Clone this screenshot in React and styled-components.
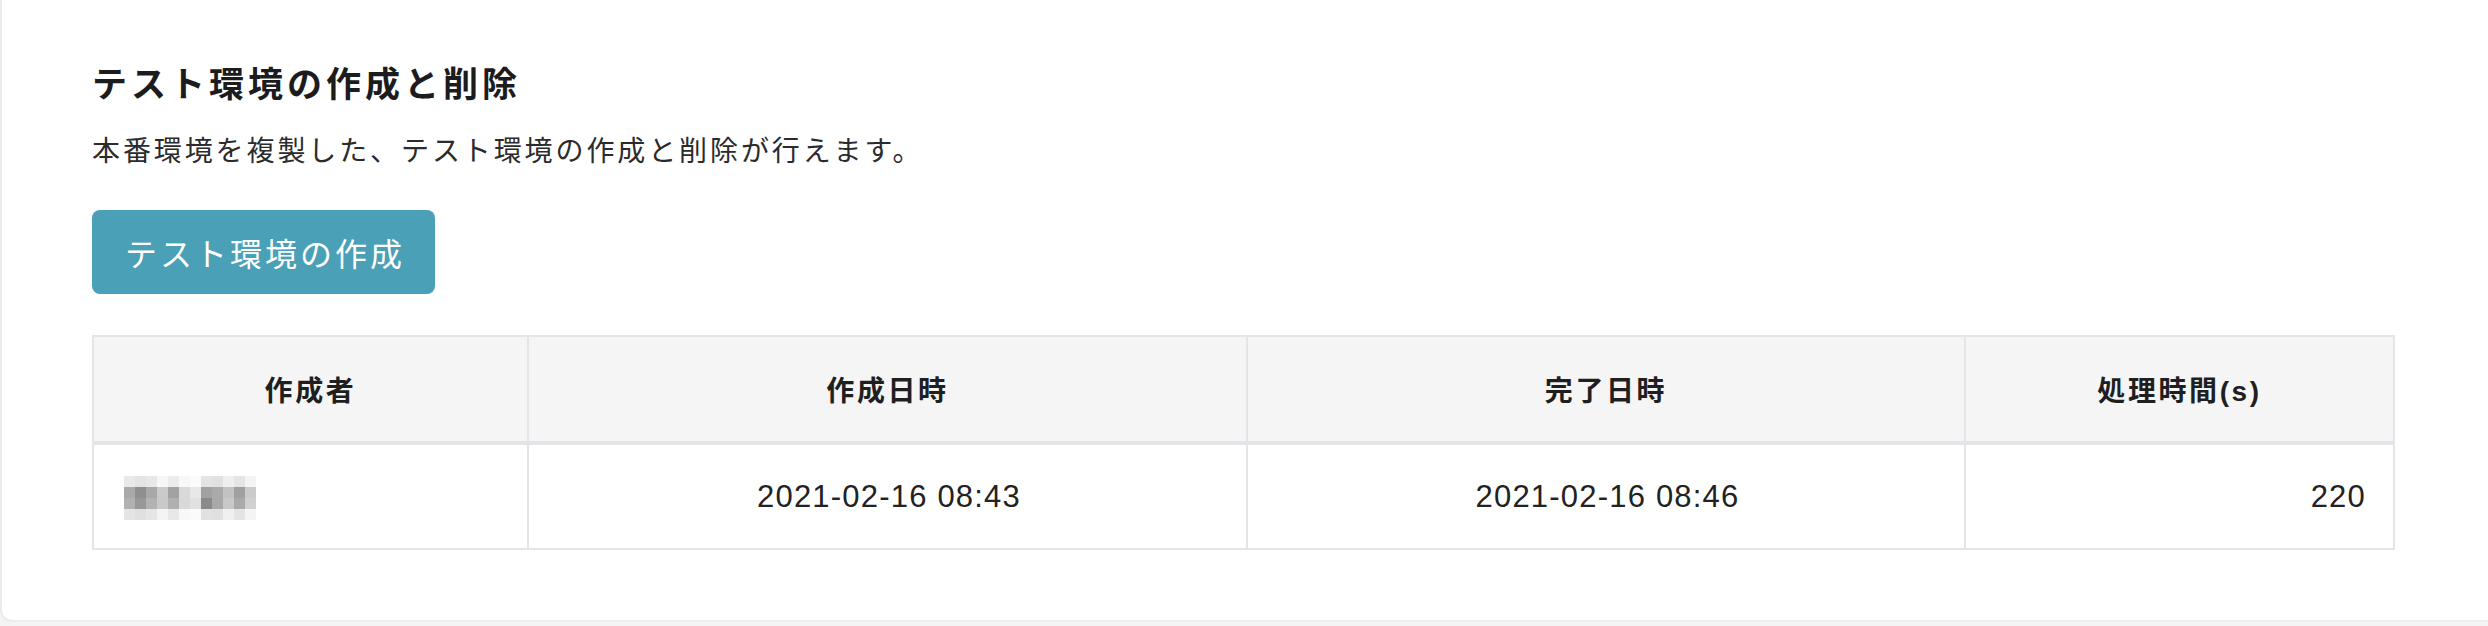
import React from 'react'
import styled, { createGlobalStyle } from 'styled-components'

const GlobalStyle = createGlobalStyle`
  body {
    margin: 0;
    background: #f4f4f5;
    font-family: "Liberation Sans", "Noto Sans CJK JP", sans-serif;
    color: #212529;
  }
`

const rows = [
  { created: '2021-02-16 08:43', finished: '2021-02-16 08:46', seconds: '220' },
]

// pixelated name, the reference hides it behind a mosaic
const mosaic = [
  ['#e9e9e9', '#e4e4e4', '#e8e8e8', '#f7f7f7', '#ececec', '#f8f8f8', '#fbfbfb', '#e4e4e4', '#e1e1e1', '#efefef', '#e5e5e5', '#f4f4f4'],
  ['#a9a9a9', '#8f8f8f', '#a8a8a8', '#cacaca', '#a2a2a2', '#d9d9d9', '#e8e8e8', '#a1a1a1', '#aaaaaa', '#c2c2c2', '#a0a0a0', '#cbcbcb'],
  ['#b1b1b1', '#989898', '#b2b2b2', '#c9c9c9', '#b0b0b0', '#d9d9d9', '#e1e1e1', '#8a8a8a', '#a9a9a9', '#c8c8c8', '#a9a9a9', '#d0d0d0'],
  ['#e5e5e5', '#e0e0e0', '#e5e5e5', '#f4f4f4', '#e8e8e8', '#f8f8f8', '#fbfbfb', '#e1e1e1', '#e0e0e0', '#f0f0f0', '#e4e4e4', '#f4f4f4'],
]

const App = () => {
  return (
    <>
      <GlobalStyle />
      <Card>
        <Title>テスト環境の作成と削除</Title>
        <Description>本番環境を複製した、テスト環境の作成と削除が行えます。</Description>
        <CreateButton type="button">テスト環境の作成</CreateButton>
        <Table>
          <colgroup>
            <col style={{ width: 435 }} />
            <col style={{ width: 719 }} />
            <col style={{ width: 718 }} />
            <col />
          </colgroup>
          <thead>
            <tr>
              <Th>作成者</Th>
              <Th>作成日時</Th>
              <Th>完了日時</Th>
              <Th>処理時間(s)</Th>
            </tr>
          </thead>
          <tbody>
            {rows.map((row, i) => (
              <tr key={i}>
                <Td $align="left">
                  <Mosaic>
                    {mosaic.flat().map((shade, j) => (
                      <Pixel key={j} $shade={shade} />
                    ))}
                  </Mosaic>
                </Td>
                <Td $align="center">{row.created}</Td>
                <Td $align="center">{row.finished}</Td>
                <Td $align="right">{row.seconds}</Td>
              </tr>
            ))}
          </tbody>
        </Table>
      </Card>
    </>
  )
}

const Card = styled.section`
  background: #fff;
  border-left: 2px solid #ececee;
  border-bottom: 2px solid #ececee;
  border-bottom-left-radius: 12px;
  padding: 61px 93px 70px 90px;
`

const Title = styled.h2`
  margin: 0;
  font-family: "Noto Sans CJK JP", sans-serif;
  font-size: 35px;
  line-height: 42px;
  letter-spacing: 4px;
  font-weight: 700;
  color: #1c1c1e;
`

const Description = styled.p`
  margin: 25px 0 0;
  font-family: "Noto Sans CJK JP", sans-serif;
  font-size: 28px;
  line-height: 42px;
  letter-spacing: 2.9px;
  color: #2b2b2d;
`

const CreateButton = styled.button`
  display: block;
  margin-top: 40px;
  height: 84px;
  padding: 0 30px 0 33px;
  border: none;
  border-radius: 8px;
  background: #4aa0b6;
  color: #fff;
  font-family: "Noto Sans CJK JP", sans-serif;
  font-size: 32px;
  letter-spacing: 3px;
  cursor: pointer;
`

const Table = styled.table`
  margin-top: 41px;
  width: 100%;
  table-layout: fixed;
  border-collapse: collapse;
  border: 2px solid #e3e5e8;
`

const Th = styled.th`
  height: 104px;
  padding: 0 28px;
  background: #f5f5f5;
  border-left: 2px solid #e3e5e8;
  border-bottom: 4px solid #e3e5e8;
  font-size: 28px;
  letter-spacing: 2.6px;
  font-weight: 700;
  color: #1f1f21;
  text-align: center;
  &:first-child {
    border-left: none;
  }
`

const Td = styled.td`
  height: 103px;
  padding: 0 27px 0 30px;
  border-left: 2px solid #e3e5e8;
  font-size: 31px;
  letter-spacing: 1.2px;
  color: #222;
  text-align: ${(p) => p.$align};
  vertical-align: middle;
  &:first-child {
    border-left: none;
  }
`

const Mosaic = styled.div`
  display: grid;
  grid-template-columns: repeat(12, 11px);
  grid-auto-rows: 11px;
  width: 132px;
  margin-top: 2px;
`

const Pixel = styled.span`
  background: ${(p) => p.$shade};
`

export default App
